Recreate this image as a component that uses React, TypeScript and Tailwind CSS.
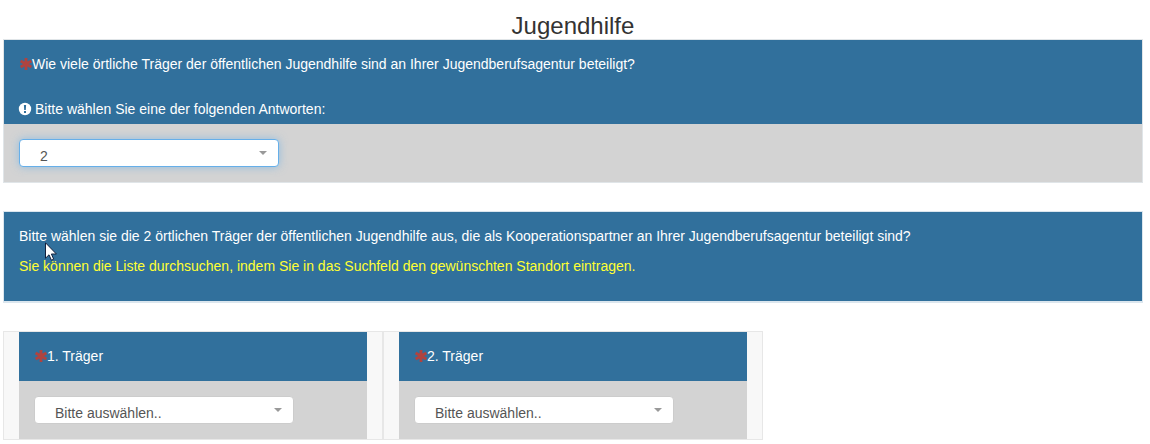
import React from "react";

type DropdownProps = {
  id: string;
  options: string[];
  value: string;
  onChange: (value: string) => void;
  active?: boolean;
};

const Dropdown: React.FC<DropdownProps> = ({ id, options, value, onChange, active }) => {
  return (
    <div className="relative w-[260px] max-w-full">
      <select
        id={id}
        value={value}
        onChange={(e) => onChange(e.target.value)}
        className={`block h-7 w-full appearance-none rounded border bg-white pt-[6px] pr-8 pl-5 text-sm leading-5 text-[#555] outline-none ${
          active ? "border-[#66afe9] shadow-[0_0_8px_rgba(102,175,233,0.6)]" : "border-[#ccc]"
        }`}
      >
        {options.map((option) => (
          <option key={option}>{option}</option>
        ))}
      </select>
      <svg viewBox="0 0 8 4" className="pointer-events-none absolute top-3 right-3 h-1 w-2 fill-[#999]">
        <path d="M0 0h8L4 4z" />
      </svg>
    </div>
  );
};

const Required: React.FC = () => (
  <svg viewBox="0 0 12 12" className="h-3 w-3 shrink-0 stroke-[#b0433f]" aria-hidden>
    <path d="M6 0v12M.6 2.9l10.8 6.2M.6 9.1l10.8-6.2" strokeWidth="2.8" />
  </svg>
);

const InfoIcon: React.FC = () => (
  <svg viewBox="0 0 12 12" className="h-3 w-3 shrink-0 overflow-visible" aria-hidden>
    <circle cx="6" cy="6" r="6.2" fill="#fff" />
    <path d="M4.9 2h2.2L6.8 7H5.2zM5 8h2v2H5z" fill="#31709c" />
  </svg>
);

const Traeger: React.FC<{ nr: number }> = ({ nr }) => {
  const [value, setValue] = React.useState("Bitte auswählen..");
  return (
    <div className="w-1/3 border border-[#e7e7e7] bg-[#f8f8f8] px-[15px]">
      <label htmlFor={`traeger-${nr}`} className="flex items-center bg-[#31709c] px-4 pt-[14px] pb-[15px] text-white">
        <Required />
        {nr}. Träger
      </label>
      <div className="bg-[#d3d3d3] p-[15px]">
        <Dropdown id={`traeger-${nr}`} options={["Bitte auswählen.."]} value={value} onChange={setValue} />
      </div>
    </div>
  );
};

const App: React.FC = () => {
  const [count, setCount] = React.useState("2");

  return (
    <main className="bg-white pt-[13px] pr-[7px] pl-[3px] font-['Liberation_Sans',Arial,sans-serif] text-sm leading-5">
      <h1 className="text-center text-2xl leading-[26px] text-[#333]">Jugendhilfe</h1>

      {/* number of agencies */}
      <section className="border border-[#e0e5e8]">
        <div className="bg-[#31709c] px-[15px] pt-[14px] pb-[5px] text-white">
          <label htmlFor="anzahl" className="flex items-center pl-px">
            <Required />
            Wie viele örtliche Träger der öffentlichen Jugendhilfe sind an Ihrer Jugendberufsagentur beteiligt?
          </label>
          <p className="mt-[25px] flex items-center gap-1">
            <InfoIcon />
            Bitte wählen Sie eine der folgenden Antworten:
          </p>
        </div>
        <div className="bg-[#d3d3d3] p-[15px]">
          <Dropdown id="anzahl" options={["1", "2", "3", "4", "5"]} value={count} onChange={setCount} active />
        </div>
      </section>

      {/* hint */}
      <section className="relative mt-7 border border-b-2 border-[#dbe6ee] bg-[#31709c] px-[15px] pt-[14px] pb-[25px]">
        <p className="text-white">
          Bitte wählen sie die 2 örtlichen Träger der öffentlichen Jugendhilfe aus, die als Kooperationspartner an Ihrer
          Jugendberufsagentur beteiligt sind?
        </p>
        <p className="mt-[10px] text-[#ffff33]">
          Sie können die Liste durchsuchen, indem Sie in das Suchfeld den gewünschten Standort eintragen.
        </p>
        {/* mouse pointer */}
        <svg viewBox="0 0 12 19" className="pointer-events-none absolute top-[30px] left-[41px] h-[19px] w-3">
          <path
            d="M.5 .8v15.4l3.5-3.4 2.4 5.4 2.3-1-2.3-5.2h5z"
            fill="#fff"
            stroke="#12203c"
            strokeWidth="1"
            strokeLinejoin="round"
          />
        </svg>
      </section>

      {/* one column per agency */}
      <section className="mt-7 flex">
        <Traeger nr={1} />
        <Traeger nr={2} />
      </section>
    </main>
  );
};

export default App;
